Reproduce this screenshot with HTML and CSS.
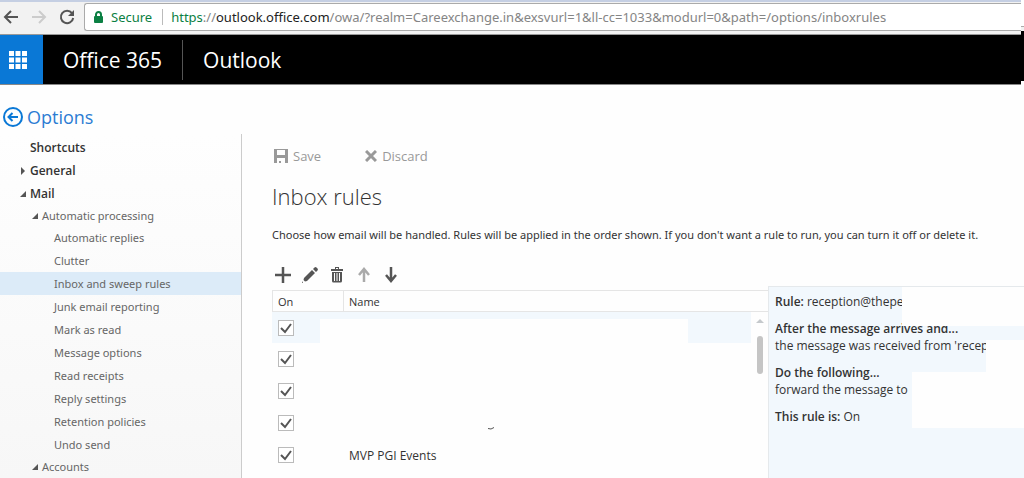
FILE: index.html
```
<!DOCTYPE html>
<html lang="en">
  <head>
    <meta charset="UTF-8" />
    <meta name="viewport" content="width=device-width, initial-scale=1.0" />
    <title>Inbox rules - Outlook</title>
    <link rel="stylesheet" href="styles.css">
  </head>
  <body>
    <div class="browser">
      <button class="nav-btn" aria-label="Back">
        <svg width="16" height="16" viewBox="0 0 16 16"><path d="M15 8H2M8 2L2 8l6 6" /></svg>
      </button>
      <button class="nav-btn disabled" aria-label="Forward">
        <svg width="16" height="16" viewBox="0 0 16 16"><path d="M1 8h13M8 2l6 6-6 6" /></svg>
      </button>
      <button class="nav-btn" aria-label="Reload">
        <svg width="16" height="16" viewBox="0 0 16 16"><path d="M13 4.2A6.2 6.2 0 1 0 14.2 9" /><path class="solid" d="M15 1v6H9z" /></svg>
      </button>
      <div class="address">
        <svg class="lock" width="9" height="12" viewBox="0 0 9 12"><path d="M2 5V3.500a2.500 2.500 0 0 1 5 0V5" /><rect x="0" y="5" width="9" height="7" rx="1" /></svg>
        <span class="secure">Secure</span>
        <div class="url" role="textbox" contenteditable="true" aria-label="Address" spellcheck="false"><span class="scheme">https</span>://<span class="host">outlook.office.com</span>/owa/?realm=Careexchange.in&amp;exsvurl=1&amp;ll-cc=1033&amp;modurl=0&amp;path=/options/inboxrules</div>
      </div>
    </div>

    <header class="suite">
      <button class="launcher" aria-label="App launcher">
        <svg width="18" height="18" viewBox="0 0 18 18"><path d="M0 0h5v5H0zM6.500 0h5v5h-5zM13 0h5v5h-5zM0 6.500h5v5H0zM6.500 6.500h5v5h-5zM13 6.500h5v5h-5zM0 13h5v5H0zM6.500 13h5v5h-5zM13 13h5v5h-5z" /></svg>
      </button>
      <a class="brand" href="#">Office 365</a>
      <a class="app" href="#">Outlook</a>
    </header>
    <div class="edge"></div>

    <a class="options" href="#">
      <svg width="20" height="20" viewBox="0 0 20 20"><circle cx="10" cy="10" r="9" /><path d="M15 10H6M9.500 6L5.500 10l4 4" /></svg>
      Options
    </a>

    <div class="page">
      <nav class="sidebar">
        <a class="top" href="#">Shortcuts</a>
        <a class="top" href="#"><svg class="caret closed" width="6" height="8" viewBox="0 0 6 8"><path d="M1 0l4 4-4 4z" /></svg>General</a>
        <a class="top" href="#"><svg class="caret" width="6" height="6" viewBox="0 0 6 6"><path d="M6 0v6H0z" /></svg>Mail</a>
        <a class="sub" href="#"><svg class="caret" width="6" height="6" viewBox="0 0 6 6"><path d="M6 0v6H0z" /></svg>Automatic processing</a>
        <a class="item" href="#">Automatic replies</a>
        <a class="item" href="#">Clutter</a>
        <a class="item selected" href="#">Inbox and sweep rules</a>
        <a class="item" href="#">Junk email reporting</a>
        <a class="item" href="#">Mark as read</a>
        <a class="item" href="#">Message options</a>
        <a class="item" href="#">Read receipts</a>
        <a class="item" href="#">Reply settings</a>
        <a class="item" href="#">Retention policies</a>
        <a class="item" href="#">Undo send</a>
        <a class="sub" href="#"><svg class="caret" width="6" height="6" viewBox="0 0 6 6"><path d="M6 0v6H0z" /></svg>Accounts</a>
      </nav>

      <main class="content">
        <div class="actions">
          <button disabled>
            <svg width="14" height="14" viewBox="0 0 14 14"><path fill-rule="evenodd" d="M0 0h14v14H0zM3 1v5h8V1zM3 9v5h2v-2h2v2h4V9z" /></svg>
            Save
          </button>
          <button disabled>
            <svg width="12" height="12" viewBox="0 0 12 12"><path class="cross" d="M1 1l10 10M11 1L1 11" /></svg>
            Discard
          </button>
        </div>
        <h1>Inbox rules</h1>
        <p class="intro">Choose how email will be handled. Rules will be applied in the order shown. If you don't want a rule to run, you can turn it off or delete it.</p>

        <div class="toolbar">
          <button aria-label="Add"><svg width="16" height="16" viewBox="0 0 16 16"><path d="M8 0v16M0 8h16" /></svg></button>
          <button aria-label="Edit"><svg width="16" height="16" viewBox="0 0 16 16"><path class="solid" d="M2 11l8-8 3 3-8 8-2 .500L1.500 13zM11 2l1.500-1.500q1-.800 2 0l1 1q.800 1 0 2L14 5zM0 14l1 2H0z" /></svg></button>
          <button aria-label="Delete"><svg width="16" height="16" viewBox="0 0 16 16"><path class="solid" fill-rule="evenodd" d="M2 2h4V0h4v2h4v2H2zM7 1v1h2V1zM3 5h10v9q0 1.500-1.500 1.500h-7Q3 15.500 3 14zM5 6v8h1V6zM7.500 6v8h1V6zM10 6v8h1V6z" /></svg></button>
          <button class="muted" aria-label="Move up"><svg width="16" height="16" viewBox="0 0 16 16"><path d="M8 15V2M3 8l5-6 5 6" /></svg></button>
          <button aria-label="Move down"><svg width="16" height="16" viewBox="0 0 16 16"><path d="M8 0v14M3 8l5 6 5-6" /></svg></button>
        </div>

        <div class="rules">
          <div class="list">
            <table>
              <thead>
                <tr><th class="on">On</th><th>Name</th></tr>
              </thead>
              <tbody>
                <tr class="current"><td><input type="checkbox" aria-label="Rule 1 on" checked /></td><td></td></tr>
                <tr><td><input type="checkbox" aria-label="Rule 2 on" checked /></td><td></td></tr>
                <tr><td><input type="checkbox" aria-label="Rule 3 on" checked /></td><td></td></tr>
                <tr><td><input type="checkbox" aria-label="Rule 4 on" checked /></td><td></td></tr>
                <tr><td><input id="rule5" type="checkbox" checked /></td><td><label for="rule5">MVP PGI Events</label></td></tr>
              </tbody>
            </table>
            <div class="scrollbar">
              <svg width="8" height="4" viewBox="0 0 8 4"><path d="M0 4l4-4 4 4z" /></svg>
              <div class="thumb"></div>
            </div>
            <div class="cover cover-name"></div>
            <svg class="stroke" width="6" height="3" viewBox="0 0 6 3"><path d="M0 1.500Q3 3 6 .500" /></svg>
          </div>

          <section class="detail">
            <p><b>Rule:</b> reception@thepe</p>
            <p><b>After the message arrives and...</b><br />the message was received from 'recep</p>
            <p><b>Do the following...</b><br />forward the message to</p>
            <p><b>This rule is:</b> On</p>
            <div class="cover cover-rule"></div>
            <div class="cover cover-from"></div>
            <div class="cover cover-to"></div>
          </section>
        </div>
      </main>
    </div>
  </body>
</html>
```
FILE: styles.css
```
* {
  box-sizing: border-box;
}

body {
  margin: 0;
  height: 100vh;
  display: flex;
  flex-direction: column;
  overflow: hidden;
  position: relative;
  font-family: "Open Sans", "Noto Sans", sans-serif;
  font-size: 12px;
  color: #333;
  background: #fefefe;
}

a {
  color: inherit;
  text-decoration: none;
}

button {
  padding: 0;
  border: none;
  background: none;
  font: inherit;
  color: inherit;
  display: flex;
  align-items: center;
}

svg {
  flex: none;
}

/* browser bar */
.browser {
  display: flex;
  flex: none;
  align-items: center;
  height: 35px;
  padding: 0 0 3px 3px;
  background: #f2f2f2;
  border-top: 2px solid #c5cfe3;
  border-bottom: 1px solid #999;
}

.nav-btn {
  width: 28px;
}

.nav-btn path {
  fill: none;
  stroke: #555;
  stroke-width: 2;
}

.nav-btn .solid {
  fill: #555;
  stroke: none;
}

.nav-btn.disabled path {
  stroke: #ccc;
}

.address {
  flex: 1;
  display: flex;
  align-items: center;
  height: 28px;
  margin-left: -3px;
  padding-left: 9px;
  border: 1px solid #aaa;
  border-right: none;
  border-radius: 3px 0 0 3px;
  background: #fff;
  font-family: "Noto Sans", sans-serif;
  font-size: 13px;
  line-height: 18px;
  white-space: nowrap;
}

.lock rect {
  fill: #0b8043;
}

.lock path {
  fill: none;
  stroke: #0b8043;
  stroke-width: 2;
}

.secure {
  margin-left: 8px;
  padding-right: 10px;
  border-right: 1px solid #bbb;
  line-height: 16px;
  color: #0b8043;
}

.url {
  padding-left: 8px;
  color: #858585;
}

.scheme {
  color: #0b8043;
}

.host {
  color: #222;
}

/* Office bar */
.suite {
  display: flex;
  flex: none;
  align-items: center;
  height: 50px;
  background: #000;
  border-bottom: 1px solid #888;
  color: #fff;
  font-size: 21px;
}

.launcher {
  width: 43px;
  height: 49px;
  padding-left: 9px;
  background: #0a78d6;
}

.launcher path {
  fill: #fff;
}

.brand,
.app {
  padding: 0 20px;
  line-height: 40px;
}

.brand {
  border-right: 1px solid #555;
}

.edge {
  position: absolute;
  top: 0;
  right: 0;
  width: 3px;
  height: 85px;
  background: linear-gradient(#fff 26px, #aaa 26px 27px, #f2f2f2 27px 31px, #000 31px 81px, #fff 81px);
}

.options {
  display: flex;
  flex: none;
  align-items: center;
  gap: 4px;
  height: 49px;
  padding: 15px 0 0 3px;
  color: #2b7cd3;
  font-size: 18px;
}

.options svg {
  fill: none;
  stroke: #0a78d6;
  stroke-width: 2;
}

.page {
  flex: 1;
  min-height: 0;
  display: flex;
}

/* navigation tree */
.sidebar {
  flex: none;
  width: 242px;
  padding-top: 2px;
  border-right: 1px solid #ccc;
  background: linear-gradient(#fefefe, #f7f7f7);
  color: #666;
}

.sidebar a {
  display: flex;
  align-items: center;
  height: 23px;
}

.sidebar .top {
  padding-left: 30px;
  font-weight: 600;
  color: #333;
}

.sidebar .sub,
.sidebar .item {
  font-family: "Noto Sans", sans-serif;
  font-size: 11px;
}

.sidebar .sub {
  height: 21px;
  padding-left: 42px;
}

.sidebar .item {
  padding-left: 54px;
}

.sidebar .selected {
  background: #dcebf8;
}

.caret {
  margin: 0 4px 0 -10px;
  fill: #555;
}

/* rules */
.content {
  flex: 1;
  min-width: 0;
  display: flex;
  flex-direction: column;
  padding: 12px 0 0 30px;
}

.actions {
  display: flex;
  gap: 44px;
  padding-left: 2px;
  font-size: 13px;
  line-height: 20px;
  color: #999;
}

.actions button {
  gap: 5px;
}

.actions svg {
  fill: #999;
}

.cross {
  stroke: #999;
  stroke-width: 3;
}

h1 {
  margin: 15px 0 0;
  font-size: 22px;
  font-weight: 300;
  line-height: 30px;
}

.intro {
  margin: 16px 0 0;
  font-family: "Noto Sans", sans-serif;
  font-size: 11px;
  line-height: 16px;
  white-space: nowrap;
}

.toolbar {
  display: flex;
  gap: 11px;
  margin: 24px 0 0 3px;
  height: 16px;
}

.toolbar path {
  fill: none;
  stroke: #555;
  stroke-width: 2.5;
}

.toolbar .solid {
  fill: #555;
  stroke: none;
}

.toolbar .muted path {
  stroke: #aaa;
}

.rules {
  flex: 1;
  display: flex;
  margin-top: 3px;
}

.list {
  position: relative;
  flex: 2;
  margin-top: 4px;
}

table {
  width: 100%;
  border-collapse: separate;
  border-spacing: 0;
  table-layout: fixed;
}

th {
  height: 22px;
  padding: 1px 0 0 5px;
  border: solid #e5e5e5;
  border-width: 1px 0 1px 1px;
  font-size: 11px;
  line-height: 16px;
  font-weight: 400;
  text-align: left;
}

th.on {
  width: 71px;
}

td {
  height: 32px;
  padding: 0 0 0 6px;
}

.current td {
  height: 31px;
  background: #f2f8fd;
}

input[type="checkbox"] {
  appearance: none;
  display: block;
  width: 16px;
  height: 16px;
  margin: 0;
  border: 1px solid #bbb;
  background: #fff url("data:image/svg+xml,%3Csvg xmlns='http://www.w3.org/2000/svg' viewBox='0 0 14 14'%3E%3Cpath d='M2 7l4 4 6-8' fill='none' stroke='%23555' stroke-width='2'/%3E%3C/svg%3E");
}

.scrollbar {
  position: absolute;
  top: 22px;
  right: 0;
  bottom: 0;
  width: 17px;
  display: flex;
  flex-direction: column;
  align-items: center;
  gap: 13px;
  padding-top: 7px;
  background: #fefefe;
}

.scrollbar path {
  fill: #c5c9cc;
}

.thumb {
  width: 6px;
  height: 38px;
  border-radius: 3px;
  background: #c5c5c5;
}

.detail {
  position: relative;
  flex: 1;
  min-width: 256px;
  max-width: 256px;
  padding: 6px 0 0 6px;
  border: solid #e5e9ec;
  border-width: 1px 0 0 1px;
  background: #f2f8fd;
  line-height: 17px;
  white-space: nowrap;
  overflow: hidden;
}

.detail p {
  margin: 0 0 10px;
}

.detail b {
  font-weight: 600;
}

/* blanked out areas */
.cover {
  position: absolute;
  background: #fefefe;
}

.cover-name {
  top: 29px;
  left: 48px;
  right: 80px;
  height: 26px;
}

.cover-rule {
  top: -1px;
  left: 133px;
  right: 0;
  height: 40px;
}

.cover-from {
  top: 53px;
  left: 217px;
  right: 0;
  height: 33px;
}

.cover-to {
  top: 85px;
  left: 143px;
  right: 0;
  height: 56px;
}

.stroke {
  position: absolute;
  top: 137px;
  left: 216px;
  fill: none;
  stroke: #555;
}
```
